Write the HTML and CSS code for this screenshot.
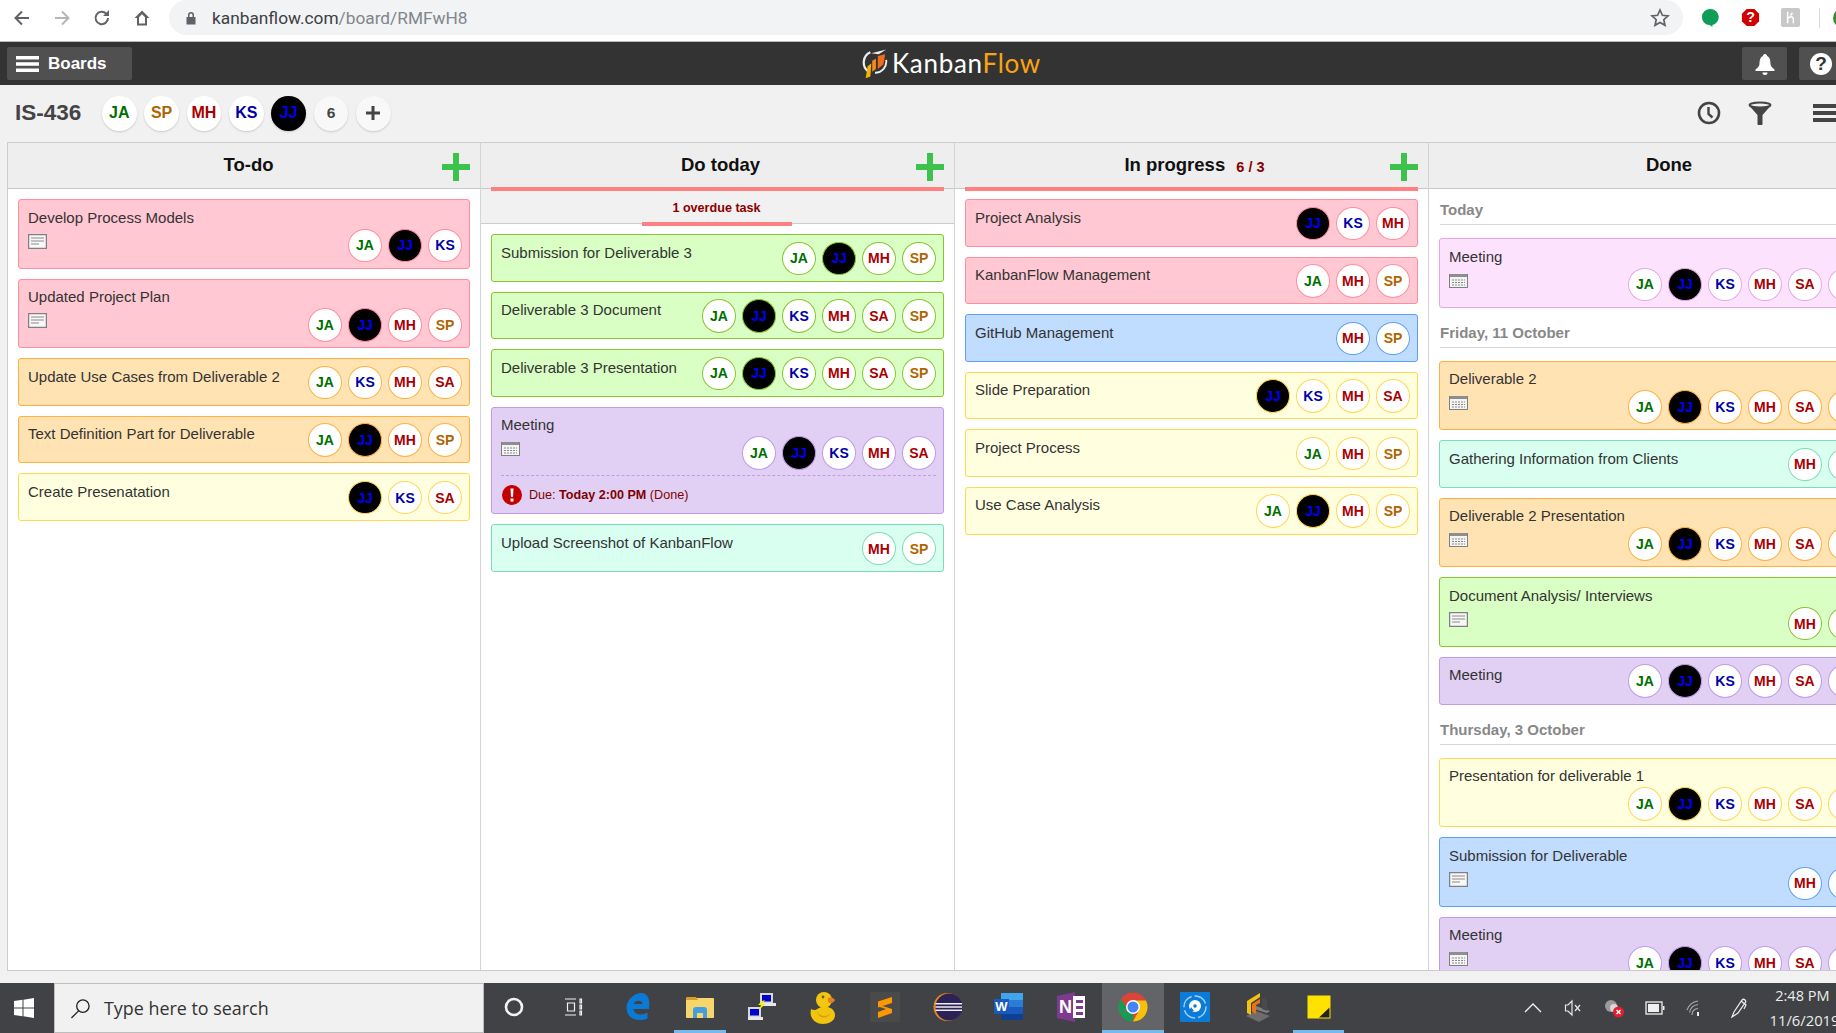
FILE: index.html
```html
<!DOCTYPE html>
<html lang="en">
<head>
<meta charset="utf-8">
<title>KanbanFlow - IS-436</title>
<link rel="stylesheet" href="styles.css">
</head>
<body>
<div class="page">

<header class="browser">
  <div class="nav-icons">
    <svg class="nav-icon" viewBox="0 0 20 20"><path d="M17 10H4M10 3.5 3.5 10l6.500 6.500" fill="none" stroke="#5f6368" stroke-width="2"/></svg>
    <svg class="nav-icon" viewBox="0 0 20 20"><path d="M3 10h13M10 3.500l6.500 6.500-6.500 6.500" fill="none" stroke="#b4b6b9" stroke-width="2"/></svg>
    <svg class="nav-icon" viewBox="0 0 20 20"><path d="M16 10a6.200 6.200 0 1 1-1.800-4.400" fill="none" stroke="#5f6368" stroke-width="2"/><path d="M17 2v6h-6z" fill="#5f6368"/></svg>
    <svg class="nav-icon" viewBox="0 0 20 20"><path d="M10 2.500 2.500 10H5v7.500h10V10h2.500zM7 15.500V9.300l3-3 3 3v6.200z" fill="#5f6368"/></svg>
  </div>
  <div class="omnibox">
    <svg class="lock" viewBox="0 0 12 14"><path d="M3 6V4a3 3 0 0 1 6 0v2h1.500v7.500h-9V6zM4.500 6h3V4a1.500 1.500 0 0 0-3 0z" fill="#5f6368"/></svg>
    <span class="url">kanbanflow.com<span class="url-path">/board/RMFwH8</span></span>
    <svg class="star" viewBox="0 0 20 20"><path d="m10 2 2.400 5.300 5.600.6-4.200 3.800 1.200 5.600L10 14.500l-5 2.800 1.200-5.600L2 7.900l5.600-.6z" fill="none" stroke="#5f6368" stroke-width="1.700"/></svg>
  </div>
  <div class="extensions">
    <svg class="ext" viewBox="0 0 20 20"><path d="M10 1a8.500 8.500 0 0 0-1 17l3 2v-2.200A8.500 8.500 0 0 0 10 1z" fill="#0f9d58"/></svg>
    <svg class="ext" viewBox="0 0 20 20"><path d="M6 1h8l5 5v8l-5 5H6l-5-5V6z" fill="#d20000"/><text x="10" y="15" text-anchor="middle" class="ext-q">?</text></svg>
    <svg class="ext" viewBox="0 0 20 20"><rect x="0" y="0" width="20" height="20" rx="2" fill="#c8c8c8"/><path d="M7 4v12M7 11c3-3 6-2 6 1v4M12 5l-2 3" fill="none" stroke="#fff" stroke-width="1.600"/></svg>
    <span class="ext-sep"></span>
    <span class="profile-dot"></span>
  </div>
</header>

<nav class="topbar">
  <button class="bar-btn boards">
    <svg class="boards-icon" viewBox="0 0 23 16"><path d="M0 0h23v3.500H0zM0 6.250h23v3.500H0zM0 12.500h23V16H0z" fill="#fff"/></svg>
    <span>Boards</span>
  </button>
  <div class="logo">
    <svg class="logo-mark" viewBox="0 0 28 32">
      <path d="M9 4A12 12 0 0 0 6 24" fill="none" stroke="#eee" stroke-width="2.400"/>
      <path d="M26 12a12 12 0 0 1-12 14" fill="none" stroke="#eee" stroke-width="2"/>
      <path d="M10 5 26 1 18 6z" fill="#eee"/>
      <path d="M6 19l4-3-1 14-5 2z" fill="#f4b400"/>
      <path d="M11 13l4-2v11l-4 3z" fill="#f68a1e"/>
      <path d="M17 8l8-2-2 11-6 5z" fill="#ef6c1a"/>
    </svg>
    <span class="logo-text">Kanban<span class="logo-flow">Flow</span></span>
  </div>
  <button class="bar-btn icon-btn">
    <svg class="bell" viewBox="0 0 22 22"><path d="M11 1c1.500 0 2 1 2 2 3 1 3.500 5 3.500 8 0 2 2 4 4 5.500v1.500h-19v-1.500c2-1.500 4-3.500 4-5.500 0-3 .5-7 3.500-8 0-1 .5-2 2-2zM8.500 19.500h5a2.500 2.500 0 0 1-5 0z" fill="#fff"/></svg>
  </button>
  <button class="bar-btn help-btn">
    <svg class="help" viewBox="0 0 24 24"><circle cx="12" cy="12" r="11" fill="#fff"/><text x="12" y="18" text-anchor="middle" class="help-q">?</text></svg>
  </button>
</nav>

<section class="board-head">
  <h1 class="board-name">IS-436</h1>
  <div class="members">
    <span class="member ja">JA</span>
    <span class="member sp">SP</span>
    <span class="member mh">MH</span>
    <span class="member ks">KS</span>
    <span class="member jj">JJ</span>
    <span class="member more">6</span>
    <span class="member more"><svg class="add-member" viewBox="0 0 14 14"><path d="M5.500 0h3v5.500H14v3H8.500V14h-3V8.500H0v-3h5.500z" fill="#444"/></svg></span>
  </div>
  <div class="board-tools">
    <svg class="tool clock" viewBox="0 0 24 24"><circle cx="12" cy="12" r="10" fill="none" stroke="#444" stroke-width="2.600"/><path d="M11.500 6v7l4 3.500" fill="none" stroke="#444" stroke-width="2.400"/></svg>
    <svg class="tool funnel" viewBox="0 0 24 24"><ellipse cx="12" cy="4" rx="10.500" ry="2.600" fill="#f1f1f1" stroke="#444" stroke-width="2"/><path d="M1.500 5c3 2 18 2 21 0l-8 9v8.500a2 2 0 0 1-5 0V14z" fill="#444"/></svg>
    <svg class="tool lines" viewBox="0 0 26 18"><path d="M0 0h26v4H0zM0 7h26v4H0zM0 14h26v4H0z" fill="#444"/></svg>
  </div>
</section>

<main class="board">

  <section class="col first">
    <div class="col-head">
      <h2 class="col-title">To-do</h2>
      <svg class="plus" viewBox="0 0 28 28"><path d="M11 0h6v11h11v6H17v11h-6V17H0v-6h11z" fill="#3cc24d"/></svg>
    </div>
    <div class="cards">
      <article class="card tall pink">
        <div class="title">Develop Process Models</div>
        <div class="card-row">
          <svg class="mini" viewBox="0 0 19 15"><rect x=".6" y=".6" width="17.800" height="13.800" fill="#f8f8f8" stroke="#808080" stroke-width="1.300"/><path d="M3 4h13M3 7h13M3 10h8" stroke="#8a8a8a" stroke-width="1.200"/></svg>
          <div class="avatars"><span class="av ja">JA</span><span class="av jj">JJ</span><span class="av ks">KS</span></div>
        </div>
      </article>
      <article class="card tall pink">
        <div class="title">Updated Project Plan</div>
        <div class="card-row">
          <svg class="mini" viewBox="0 0 19 15"><rect x=".6" y=".6" width="17.800" height="13.800" fill="#f8f8f8" stroke="#808080" stroke-width="1.300"/><path d="M3 4h13M3 7h13M3 10h8" stroke="#8a8a8a" stroke-width="1.200"/></svg>
          <div class="avatars"><span class="av ja">JA</span><span class="av jj">JJ</span><span class="av mh">MH</span><span class="av sp">SP</span></div>
        </div>
      </article>
      <article class="card orange">
        <div class="title">Update Use Cases from Deliverable 2</div>
        <div class="avatars"><span class="av ja">JA</span><span class="av ks">KS</span><span class="av mh">MH</span><span class="av sa">SA</span></div>
      </article>
      <article class="card orange">
        <div class="title">Text Definition Part for Deliverable</div>
        <div class="avatars"><span class="av ja">JA</span><span class="av jj">JJ</span><span class="av mh">MH</span><span class="av sp">SP</span></div>
      </article>
      <article class="card yellow">
        <div class="title">Create Presenatation</div>
        <div class="avatars"><span class="av jj">JJ</span><span class="av ks">KS</span><span class="av sa">SA</span></div>
      </article>
    </div>
  </section>

  <section class="col">
    <div class="col-head limit">
      <h2 class="col-title">Do today</h2>
      <svg class="plus" viewBox="0 0 28 28"><path d="M11 0h6v11h11v6H17v11h-6V17H0v-6h11z" fill="#3cc24d"/></svg>
    </div>
    <div class="overdue">1 overdue task</div>
    <div class="cards">
      <article class="card green">
        <div class="title">Submission for Deliverable 3</div>
        <div class="avatars"><span class="av ja">JA</span><span class="av jj">JJ</span><span class="av mh">MH</span><span class="av sp">SP</span></div>
      </article>
      <article class="card green">
        <div class="title">Deliverable 3 Document</div>
        <div class="avatars"><span class="av ja">JA</span><span class="av jj">JJ</span><span class="av ks">KS</span><span class="av mh">MH</span><span class="av sa">SA</span><span class="av sp">SP</span></div>
      </article>
      <article class="card green">
        <div class="title">Deliverable 3 Presentation</div>
        <div class="avatars"><span class="av ja">JA</span><span class="av jj">JJ</span><span class="av ks">KS</span><span class="av mh">MH</span><span class="av sa">SA</span><span class="av sp">SP</span></div>
      </article>
      <article class="card tall purple">
        <div class="title">Meeting</div>
        <div class="card-row">
          <svg class="mini" viewBox="0 0 19 15"><rect x=".5" y="1.500" width="18" height="13" fill="#f4f4f4" stroke="#808080"/><path d="M1 1h17v3H1z" fill="#8e8e8e"/><path d="M3 7h13M3 9.500h13M3 12h13" stroke="#8a8a8a" stroke-width="1.200" stroke-dasharray="2 1"/></svg>
          <div class="avatars"><span class="av ja">JA</span><span class="av jj">JJ</span><span class="av ks">KS</span><span class="av mh">MH</span><span class="av sa">SA</span></div>
        </div>
        <div class="due">
          <svg class="due-icon" viewBox="0 0 20 20"><circle cx="10" cy="10" r="10" fill="#c40000"/><path d="M8.500 3.500h3l-.5 8.500H9zM8.500 13.500h3v3h-3z" fill="#fff"/></svg>
          <span>Due: <strong>Today 2:00 PM</strong> (Done)</span>
        </div>
      </article>
      <article class="card teal">
        <div class="title">Upload Screenshot of KanbanFlow</div>
        <div class="avatars"><span class="av mh">MH</span><span class="av sp">SP</span></div>
      </article>
    </div>
  </section>

  <section class="col">
    <div class="col-head limit">
      <h2 class="col-title">In progress <span class="wip">6 / 3</span></h2>
      <svg class="plus" viewBox="0 0 28 28"><path d="M11 0h6v11h11v6H17v11h-6V17H0v-6h11z" fill="#3cc24d"/></svg>
    </div>
    <div class="cards">
      <article class="card pink">
        <div class="title">Project Analysis</div>
        <div class="avatars"><span class="av jj">JJ</span><span class="av ks">KS</span><span class="av mh">MH</span></div>
      </article>
      <article class="card pink">
        <div class="title">KanbanFlow Management</div>
        <div class="avatars"><span class="av ja">JA</span><span class="av mh">MH</span><span class="av sp">SP</span></div>
      </article>
      <article class="card blue">
        <div class="title">GitHub Management</div>
        <div class="avatars"><span class="av mh">MH</span><span class="av sp">SP</span></div>
      </article>
      <article class="card yellow">
        <div class="title">Slide Preparation</div>
        <div class="avatars"><span class="av jj">JJ</span><span class="av ks">KS</span><span class="av mh">MH</span><span class="av sa">SA</span></div>
      </article>
      <article class="card yellow">
        <div class="title">Project Process</div>
        <div class="avatars"><span class="av ja">JA</span><span class="av mh">MH</span><span class="av sp">SP</span></div>
      </article>
      <article class="card yellow">
        <div class="title">Use Case Analysis</div>
        <div class="avatars"><span class="av ja">JA</span><span class="av jj">JJ</span><span class="av mh">MH</span><span class="av sp">SP</span></div>
      </article>
    </div>
  </section>

  <section class="col done">
    <div class="col-head">
      <h2 class="col-title">Done</h2>
    </div>
    <div class="cards dated">
      <h3 class="date">Today</h3>
      <article class="card tall lilac">
        <div class="title">Meeting</div>
        <div class="card-row">
          <svg class="mini" viewBox="0 0 19 15"><rect x=".5" y="1.500" width="18" height="13" fill="#f4f4f4" stroke="#808080"/><path d="M1 1h17v3H1z" fill="#8e8e8e"/><path d="M3 7h13M3 9.500h13M3 12h13" stroke="#8a8a8a" stroke-width="1.200" stroke-dasharray="2 1"/></svg>
          <div class="avatars"><span class="av ja">JA</span><span class="av jj">JJ</span><span class="av ks">KS</span><span class="av mh">MH</span><span class="av sa">SA</span><span class="av sp">SP</span></div>
        </div>
      </article>
      <h3 class="date">Friday, 11 October</h3>
      <article class="card tall orange">
        <div class="title">Deliverable 2</div>
        <div class="card-row">
          <svg class="mini" viewBox="0 0 19 15"><rect x=".5" y="1.500" width="18" height="13" fill="#f4f4f4" stroke="#808080"/><path d="M1 1h17v3H1z" fill="#8e8e8e"/><path d="M3 7h13M3 9.500h13M3 12h13" stroke="#8a8a8a" stroke-width="1.200" stroke-dasharray="2 1"/></svg>
          <div class="avatars"><span class="av ja">JA</span><span class="av jj">JJ</span><span class="av ks">KS</span><span class="av mh">MH</span><span class="av sa">SA</span><span class="av sp">SP</span></div>
        </div>
      </article>
      <article class="card teal">
        <div class="title">Gathering Information from Clients</div>
        <div class="avatars"><span class="av mh">MH</span><span class="av sp">SP</span></div>
      </article>
      <article class="card tall orange">
        <div class="title">Deliverable 2 Presentation</div>
        <div class="card-row">
          <svg class="mini" viewBox="0 0 19 15"><rect x=".5" y="1.500" width="18" height="13" fill="#f4f4f4" stroke="#808080"/><path d="M1 1h17v3H1z" fill="#8e8e8e"/><path d="M3 7h13M3 9.500h13M3 12h13" stroke="#8a8a8a" stroke-width="1.200" stroke-dasharray="2 1"/></svg>
          <div class="avatars"><span class="av ja">JA</span><span class="av jj">JJ</span><span class="av ks">KS</span><span class="av mh">MH</span><span class="av sa">SA</span><span class="av sp">SP</span></div>
        </div>
      </article>
      <article class="card tall green">
        <div class="title">Document Analysis/ Interviews</div>
        <div class="card-row">
          <svg class="mini" viewBox="0 0 19 15"><rect x=".6" y=".6" width="17.800" height="13.800" fill="#f8f8f8" stroke="#808080" stroke-width="1.300"/><path d="M3 4h13M3 7h13M3 10h8" stroke="#8a8a8a" stroke-width="1.200"/></svg>
          <div class="avatars"><span class="av mh">MH</span><span class="av sp">SP</span></div>
        </div>
      </article>
      <article class="card purple">
        <div class="title">Meeting</div>
        <div class="avatars"><span class="av ja">JA</span><span class="av jj">JJ</span><span class="av ks">KS</span><span class="av mh">MH</span><span class="av sa">SA</span><span class="av sp">SP</span></div>
      </article>
      <h3 class="date">Thursday, 3 October</h3>
      <article class="card tall yellow">
        <div class="title">Presentation for deliverable 1</div>
        <div class="card-row">
          <span></span>
          <div class="avatars"><span class="av ja">JA</span><span class="av jj">JJ</span><span class="av ks">KS</span><span class="av mh">MH</span><span class="av sa">SA</span><span class="av sp">SP</span></div>
        </div>
      </article>
      <article class="card tall blue">
        <div class="title">Submission for Deliverable</div>
        <div class="card-row">
          <svg class="mini" viewBox="0 0 19 15"><rect x=".6" y=".6" width="17.800" height="13.800" fill="#f8f8f8" stroke="#808080" stroke-width="1.300"/><path d="M3 4h13M3 7h13M3 10h8" stroke="#8a8a8a" stroke-width="1.200"/></svg>
          <div class="avatars"><span class="av mh">MH</span><span class="av sp">SP</span></div>
        </div>
      </article>
      <article class="card tall purple">
        <div class="title">Meeting</div>
        <div class="card-row">
          <svg class="mini" viewBox="0 0 19 15"><rect x=".5" y="1.500" width="18" height="13" fill="#f4f4f4" stroke="#808080"/><path d="M1 1h17v3H1z" fill="#8e8e8e"/><path d="M3 7h13M3 9.500h13M3 12h13" stroke="#8a8a8a" stroke-width="1.200" stroke-dasharray="2 1"/></svg>
          <div class="avatars"><span class="av ja">JA</span><span class="av jj">JJ</span><span class="av ks">KS</span><span class="av mh">MH</span><span class="av sa">SA</span><span class="av sp">SP</span></div>
        </div>
      </article>
    </div>
  </section>

</main>

<footer class="taskbar">
  <div class="start">
    <svg class="win" viewBox="0 0 20 20"><path d="M0 3l8.500-1.200V9.500H0zM9.500 1.700 20 0v9.500H9.500zM0 10.500h8.500v7.700L0 17zM9.500 10.500H20V20L9.500 18.300z" fill="#fff"/></svg>
  </div>
  <div class="search">
    <svg class="search-icon" viewBox="0 0 22 22"><circle cx="13.500" cy="8.500" r="6.500" fill="none" stroke="#222" stroke-width="1.400"/><path d="M9 13.500 1.500 21" stroke="#222" stroke-width="1.400"/></svg>
    <span>Type here to search</span>
  </div>
  <div class="apps">
    <span class="app"><svg class="app-icon" viewBox="0 0 30 30"><circle cx="15" cy="15" r="8" fill="none" stroke="#f2f2f2" stroke-width="2.600"/></svg></span>
    <span class="app"><svg class="app-icon" viewBox="0 0 30 30"><path d="M4 7h11M4 23h11M6.500 11h7v8h-7zM19 7h1.500v4H19zM19 13h1.500v4H19zM19 19h1.500v4H19z" fill="none" stroke="#f2f2f2" stroke-width="1.200"/></svg></span>
    <span class="app"><svg class="app-icon" viewBox="0 0 30 30"><path d="M26 17H10.500c.5 5 7 7.500 14 3.500v6c-10 4-21 0-21-10.500C3.500 8 11 1 18 1c6 0 9.500 5 8 16zM19.500 12c0-4.500-7.500-4.500-9 0z" fill="#0b7ad4"/></svg></span>
    <span class="app running"><svg class="app-icon" viewBox="0 0 30 30"><rect x="1" y="6" width="28" height="20" rx="1" fill="#f6d66c"/><path d="M1 6a1 1 0 0 1 1-1h9l2 3H1z" fill="#dd9c24"/><path d="M8 26v-8a3 3 0 0 1 3-3h8a3 3 0 0 1 3 3v8h-4v-5h-6v5z" fill="#3f9fe0"/></svg></span>
    <span class="app"><svg class="app-icon" viewBox="0 0 30 30"><rect x="13" y="1" width="13" height="10" fill="#d8d8d8"/><rect x="15" y="3" width="9" height="6.500" fill="#0000c8"/><path d="M14 11h15v3H14z" fill="#e8e8e8"/><rect x="1" y="15" width="13" height="10" fill="#d8d8d8"/><rect x="3" y="17" width="9" height="6.500" fill="#0000c8"/><path d="M1 25h15v3H1z" fill="#e8e8e8"/><path d="M18 8l-3 4h3l-6 6 2-5h-3l4-4z" fill="#f6f000"/></svg></span>
    <span class="app"><svg class="app-icon duck" viewBox="0 0 30 36"><path d="M3 20c3 2 5 1 8-1 6-3 16-1 16 7 0 6-6 9-12 9C7 35 1 29 3 20z" fill="#f1c40f"/><circle cx="16" cy="11" r="8" fill="#f3c612"/><path d="M20 9c3-1 6 0 7 2-1 3-5 4-7 2z" fill="#e67e22"/><circle cx="15" cy="8" r="1.400" fill="#7a5a00"/><path d="M9 22c2 6 11 7 14 1-3 8-13 7-14-1z" fill="#d99e0b"/></svg></span>
    <span class="app"><svg class="app-icon tile" viewBox="0 0 30 30"><rect width="30" height="30" rx="1" fill="#4a4a4a"/><path d="M22 5v6L8 15.500v-6zM8 12.500 22 17v-.5 4.500L8 26v-6l8-3-8-2.500z" fill="#ff9800"/></svg></span>
    <span class="app"><svg class="app-icon" viewBox="0 0 30 30"><circle cx="15.500" cy="15" r="14" fill="#e8881e"/><circle cx="17" cy="15" r="13.500" fill="#2c2255"/><path d="M3.500 11h27v1.600h-27zM3.500 14.200h27v1.600h-27zM3.500 17.400h27V19h-27z" fill="#f0eef8"/></svg></span>
    <span class="app"><svg class="app-icon" viewBox="0 0 30 30"><rect x="7" y="1" width="22" height="27" fill="#2b7cd3"/><rect x="7" y="1" width="22" height="7" fill="#41a5ee"/><rect x="7" y="15" width="22" height="7" fill="#185abd"/><rect x="7" y="22" width="22" height="6" fill="#103f91"/><rect x="0" y="7" width="15" height="15" fill="#185abd"/><text x="7.500" y="19" text-anchor="middle" class="tile-letter">W</text></svg></span>
    <span class="app"><svg class="app-icon" viewBox="0 0 30 30"><path d="M1 4 19 0v30L1 26z" fill="#7e3a8f"/><rect x="17" y="4" width="12" height="22" fill="#fff"/><path d="M20 8h7v3h-7zM20 14h7v3h-7zM20 20h7v3h-7z" fill="#7e3a8f"/><text x="9.500" y="21" text-anchor="middle" class="tile-letter big">N</text></svg></span>
    <span class="app active"><svg class="app-icon" viewBox="0 0 30 30"><circle cx="15" cy="15" r="14.500" fill="#db4437"/><path d="M15 15 2.500 22.500A14.500 14.500 0 0 0 15 29.500z" fill="#0f9d58"/><path d="M2.500 22.500A14.500 14.500 0 0 1 3 7l6 10z" fill="#0f9d58"/><path d="M15 8.500h13a14.500 14.500 0 0 1-13 21l6-11z" fill="#f4c20d"/><circle cx="15" cy="15" r="7" fill="#fff"/><circle cx="15" cy="15" r="5.500" fill="#4285f4"/></svg></span>
    <span class="app"><svg class="app-icon" viewBox="0 0 30 30"><rect width="30" height="30" rx="1" fill="#0a7bd8"/><circle cx="15" cy="15" r="11" fill="none" stroke="#9fd0f5" stroke-width="1.500" stroke-dasharray="14 3"/><circle cx="15" cy="14" r="6" fill="#fff"/><circle cx="15" cy="14" r="1.800" fill="#0a7bd8"/><path d="M9 20l5-1-3-4z" fill="#0a7bd8"/></svg></span>
    <span class="app"><svg class="app-icon" viewBox="0 0 30 30"><path d="M14 19l14 5-11 6L4 24z" fill="#6d6d6d"/><path d="M14 14l14 5-3 2L12 17z" fill="#808080"/><path d="M5 21V9l13-8v4L9 11v12z" fill="#f5c211"/><path d="M10 20V12l8-5v4l-4 2v9z" fill="#e8741a"/><path d="M20 5l5 3v11l-5-2z" fill="#4a4a4a"/></svg></span>
    <span class="app running"><svg class="app-icon" viewBox="0 0 30 30"><rect x="3.500" y="3.500" width="23" height="23" fill="#ffe100"/><path d="M25.500 15.500v10H15z" fill="#222"/></svg></span>
  </div>
  <div class="tray">
    <svg class="tray-icon" viewBox="0 0 20 20"><path d="M2 14l8-8 8 8" fill="none" stroke="#f0f0f0" stroke-width="1.300"/></svg>
    <svg class="tray-icon" viewBox="0 0 20 20"><path d="M1.500 7H4l4-4v14l-4-4H1.500zM11 7l5 6M16 7l-5 6" fill="none" stroke="#e8e8e8" stroke-width="1.200"/></svg>
    <svg class="tray-icon" viewBox="0 0 20 20"><circle cx="7" cy="8" r="6" fill="#9a9a9a"/><circle cx="10" cy="10" r="4" fill="#d8d8d8"/><circle cx="14.500" cy="14" r="5.500" fill="#e02030"/><path d="M12.500 12l4 4M16.500 12l-4 4" stroke="#fff" stroke-width="1.300"/></svg>
    <svg class="tray-icon" viewBox="0 0 20 20"><rect x="1" y="4" width="16" height="12" fill="none" stroke="#f0f0f0" stroke-width="1.300"/><rect x="3" y="6" width="11" height="8" fill="#f0f0f0"/><path d="M18 8h1.500v4H18z" fill="#f0f0f0"/></svg>
    <svg class="tray-icon" viewBox="0 0 20 20"><path d="M2 12a14 14 0 0 1 11-9M4.500 14.500A10 10 0 0 1 13 6.500M7 17a6 6 0 0 1 6-6.500" fill="none" stroke="#aaa" stroke-width="1.200"/><path d="M12 14h2v4h-2z" fill="#eee"/></svg>
    <svg class="tray-icon pen" viewBox="0 0 20 20"><path d="M3 19l2-5 8-12c2-2 5 1 3 3L9 15zM12 3l5 4-2 4" fill="none" stroke="#eee" stroke-width="1.200"/></svg>
    <div class="clock-text"><span>2:48 PM</span><span class="clock-date">11/6/2019</span></div>
  </div>
</footer>

</div>
</body>
</html>
```

FILE: styles.css
```css
* { box-sizing: border-box; }

html, body {
  margin: 0;
  height: 100%;
  overflow: hidden;
  background: #f1f1f1;
  font-family: "Liberation Sans", Arial, sans-serif;
  color: #333;
}

.page {
  width: 1836px;
  height: 1033px;
  display: flex;
  flex-direction: column;
  overflow: hidden;
}

/* Browser toolbar */
.browser {
  flex: 0 0 42px;
  display: flex;
  align-items: flex-start;
  background: #fff;
  border-bottom: 1px solid #b9b9b9;
}
.nav-icons {
  display: flex;
  flex: none;
  width: 169px;
  padding: 8px 0 0 11.500px;
  gap: 20px;
}
.nav-icon { width: 20px; height: 20px; flex: none; }
.omnibox {
  flex: none;
  width: 1514px;
  height: 35px;
  background: #f1f3f4;
  border-radius: 18px;
  display: flex;
  align-items: center;
  padding: 0 13px 0 16px;
}
.lock { width: 12px; height: 14px; margin-right: 15px; }
.url {
  font-family: Roboto, "Liberation Sans", sans-serif;
  font-size: 17.300px;
  color: #3c4043;
  flex: 1;
}
.url-path { color: #80868b; }
.star { width: 20px; height: 20px; }
.extensions {
  display: flex;
  align-items: center;
  height: 35px;
  padding-left: 17.500px;
  gap: 21px;
  flex: none;
}
.ext { width: 19px; height: 19px; flex: none; }
.ext-q { font: bold 15px "Liberation Sans", sans-serif; fill: #fff; }
.ext-sep { width: 1px; height: 20px; background: #d8d8d8; margin-left: -2px; flex: none; }
.profile-dot { width: 20px; height: 20px; border-radius: 50%; background: #3a8a2e; flex: none; margin-left: -8px; }

/* App top bar */
.topbar {
  flex: 0 0 43px;
  background: #333;
  display: flex;
  align-items: center;
  padding: 0 0 0 7px;
  position: relative;
}
.bar-btn {
  border: 0;
  height: 33px;
  background: #505050;
  border-radius: 2px;
  display: flex;
  align-items: center;
  justify-content: center;
  padding: 0;
  font-family: inherit;
  flex: none;
}
.boards {
  width: 125px;
  justify-content: flex-start;
  padding-left: 9px;
  gap: 9px;
  color: #fff;
  font-weight: bold;
  font-size: 17px;
}
.boards-icon { width: 23px; height: 16px; }
.logo {
  margin: 0 0 0 730px;
  width: 880px;
  flex: none;
  display: flex;
  align-items: center;
  gap: 4px;
}
.logo-mark { width: 26px; height: 31px; flex: none; }
.logo-text {
  font-family: Lato, "Liberation Sans", sans-serif;
  font-weight: 400;
  font-size: 26px;
  letter-spacing: 0.7px;
  line-height: 28px;
  padding-bottom: 2px;
  color: #fff;
}
.logo-flow { color: #fca311; }
.icon-btn { width: 45px; }
.bell { width: 22px; height: 22px; }
.help-btn { width: 45px; margin-left: 12px; justify-content: flex-start; padding-left: 10px; }
.help { width: 24px; height: 24px; }
.help-q { font: bold 19px "Liberation Sans", sans-serif; fill: #333; }

/* Board heading */
.board-head {
  flex: 0 0 57px;
  display: flex;
  align-items: center;
  padding: 0 0 1px 15px;
  background: #f1f1f1;
}
.board-name {
  margin: 0;
  font-size: 22.500px;
  font-weight: bold;
  color: #444;
  width: 87px;
}
.members { display: flex; gap: 7.850px; }
.member {
  width: 34.500px;
  height: 35px;
  border-radius: 50%;
  background: #fff;
  box-shadow: 0 1px 2px rgba(0, 0, 0, .16);
  display: flex;
  align-items: center;
  justify-content: center;
  font-weight: bold;
  font-size: 16px;
}
.member.more { background: #f8f8f8; color: #444; font-size: 15.500px; }
.add-member { width: 14px; height: 14px; }
.board-tools {
  margin-left: auto;
  display: flex;
  align-items: center;
  margin-right: -3px;
}
.tool { flex: none; }
.clock { width: 24px; height: 24px; margin-right: 27px; }
.funnel { width: 24px; height: 24px; margin-right: 40.600px; }
.lines { width: 26px; height: 18px; }

/* Avatar text colours */
.ja { color: #006f00; }
.sp { color: #b06400; }
.mh { color: #a80000; }
.sa { color: #a80000; }
.ks { color: #0000a8; }
.jj { color: #0000f0; background: #000 !important; }

/* Board */
.board {
  flex: 1;
  min-height: 0;
  margin: 0 0 12px 7px;
  display: flex;
  border-left: 1px solid #ccc;
  border-top: 1px solid #ccc;
  border-bottom: 1px solid #ccc;
  overflow: hidden;
}
.col {
  flex: 0 0 474px;
  background: #fff;
  border-right: 1px solid #d4d4d4;
  display: flex;
  flex-direction: column;
  min-height: 0;
}
.col.first { flex-basis: 473px; }
.col.done { border-right: 0; }
.col-head {
  flex: 0 0 46px;
  position: relative;
  z-index: 1;
  background: #eee;
  border-bottom: 1px solid #c8c8c8;
  display: flex;
  align-items: center;
  justify-content: center;
  padding: 0 0 2px 6px;
}
.first .col-head { padding-left: 9px; }
.col-title {
  margin: 0;
  font-size: 18.500px;
  font-weight: bold;
  color: #111;
}
.wip { font-size: 14.500px; color: #8b0000; margin-left: 6px; position: relative; top: 1.500px; }
.plus {
  position: absolute;
  right: 10px;
  top: 10px;
  width: 28px;
  height: 28px;
}
.limit::after {
  content: "";
  position: absolute;
  left: 10px;
  right: 10px;
  bottom: -3px;
  height: 4px;
  background: #ff8080;
}
.overdue {
  flex: 0 0 35px;
  position: relative;
  background: #f1f1f1;
  border-bottom: 1px solid #ccc;
  text-align: center;
  font-size: 12.600px;
  font-weight: bold;
  color: #8b0000;
  padding-top: 12px;
  padding-right: 2px;
}
.overdue::after {
  content: "";
  position: absolute;
  left: 161px;
  width: 150px;
  bottom: -3px;
  height: 4px;
  background: #ff8080;
}

.cards {
  flex: 1;
  min-height: 0;
  overflow: hidden;
  padding: 10px 10px 0;
  display: flex;
  flex-direction: column;
  gap: 10px;
}
.done .cards { padding-right: 33px; gap: 0; }
.dated .card + .card { margin-top: 10px; }

.date {
  margin: 14px 0 13px 1px;
  flex: 0 0 26px;
  font-size: 15px;
  font-weight: bold;
  color: #888;
  border-bottom: 1px solid #d8d8d8;
  line-height: 22px;
}
.date:first-child { margin-top: 0; }

/* Cards */
.card {
  flex: none;
  border: 1px solid var(--edge);
  border-radius: 3px;
  background: var(--fill);
  display: flex;
  justify-content: space-between;
  padding: 6px 7px 6px 9px;
}
.card.tall { display: block; }
.title {
  font-size: 15px;
  line-height: 18px;
  padding-top: 2.500px;
  white-space: nowrap;
  color: #333;
}
.tall .title { height: 22px; }
.card-row {
  display: flex;
  justify-content: space-between;
  align-items: flex-start;
}
.mini { width: 19px; height: 15px; margin-top: 5.500px; flex: none; display: block; }
.avatars { display: flex; gap: 6px; flex: none; position: relative; top: .5px; }
.av {
  width: 34px;
  height: 33.600px;
  border-radius: 50%;
  background: #fff;
  border: 1px solid var(--edge);
  display: flex;
  align-items: center;
  justify-content: center;
  font-size: 14px;
  font-weight: bold;
}
.due {
  margin-top: 5.500px;
  padding: 9px 0 2.500px;
  border-top: 1px dashed #c09bec;
  display: flex;
  align-items: center;
  gap: 7px;
  font-size: 12.600px;
  color: #800000;
}
.due-icon { width: 20px; height: 20px; flex: none; margin-left: 1px; }

.pink   { --fill: #ffc8d3; --edge: #ff8da0; }
.green  { --fill: #d9ffc4; --edge: #86c52e; }
.purple { --fill: #e1d0f3; --edge: #c09bec; }
.teal   { --fill: #d9fff0; --edge: #7ddcb5; }
.orange { --fill: #ffe3b3; --edge: #ffb040; }
.yellow { --fill: #ffffe0; --edge: #ffd850; }
.blue   { --fill: #c0dcff; --edge: #5ca0f5; }
.lilac  { --fill: #fde2fe; --edge: #e8a5e8; }

/* Taskbar */
.taskbar {
  flex: 0 0 50px;
  background: #414245;
  display: flex;
  align-items: stretch;
}
.start {
  flex: 0 0 54px;
  display: flex;
  align-items: center;
  justify-content: center;
  padding-right: 6px;
}
.win { width: 20px; height: 20px; }
.search {
  flex: 0 0 430px;
  background: #f1f1f1;
  border: 1px solid #bdbdbd;
  display: flex;
  align-items: center;
  padding-left: 15px;
  gap: 13px;
  font-family: "Open Sans", "Liberation Sans", sans-serif;
  font-size: 17.900px;
  color: #333;
}
.search-icon { width: 21px; height: 21px; flex: none; }
.apps { display: flex; flex: none; margin-left: -1px; }
.app {
  width: 61.900px;
  display: flex;
  align-items: center;
  justify-content: center;
  position: relative;
  padding-bottom: 3px;
}
.app-icon { width: 30px; height: 30px; }
.app-icon.duck { height: 36px; }
.app.active { background: #636467; }
.app.active::after,
.app.running::after {
  content: "";
  position: absolute;
  left: 5px;
  right: 5px;
  bottom: 0;
  height: 3px;
  background: #76b9ed;
}
.app.active::after { left: 0; right: 0; }
.tile-letter { font: bold 13px "Liberation Sans", sans-serif; fill: #fff; }
.tile-letter.big { font-size: 18px; }
.tray {
  flex: 1;
  min-width: 0;
  display: flex;
  align-items: center;
  padding-left: 174px;
  gap: 20.500px;
  white-space: nowrap;
}
.tray-icon { width: 20px; height: 20px; flex: none; }
.pen { margin-left: 3px; }
.clock-text {
  display: flex;
  flex: none;
  flex-direction: column;
  align-items: flex-end;
  color: #ececec;
  font-family: "Open Sans", "Liberation Sans", sans-serif;
  font-size: 14.500px;
  line-height: 24px;
  width: 60px;
}
.clock-date { align-self: flex-start; font-size: 14.800px; }
```
